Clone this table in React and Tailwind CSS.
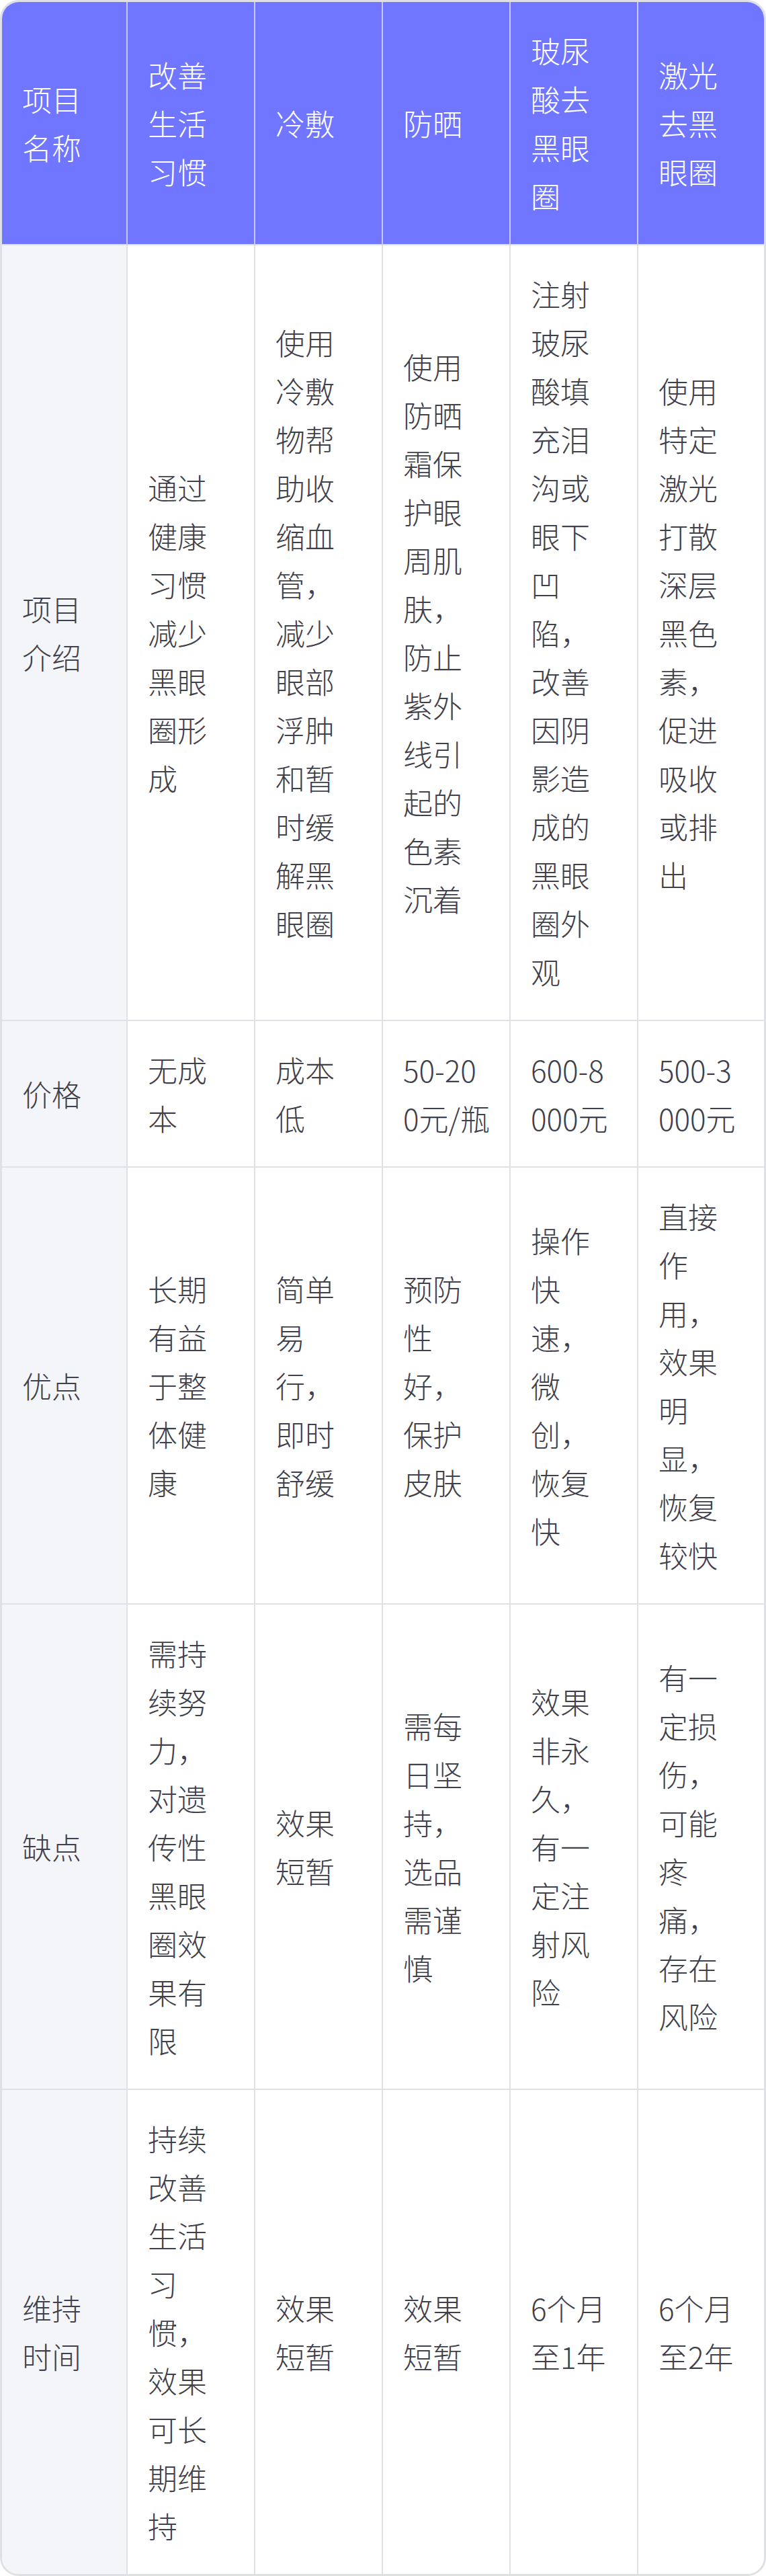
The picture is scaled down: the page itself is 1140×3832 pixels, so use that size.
const headers = ['项目名称', '改善生活习惯', '冷敷', '防晒', '玻尿酸去黑眼圈', '激光去黑眼圈'];

const rows = [
  [
    '项目介绍',
    '通过健康习惯减少黑眼圈形成',
    '使用冷敷物帮助收缩血管，减少眼部浮肿和暂时缓解黑眼圈',
    '使用防晒霜保护眼周肌肤，防止紫外线引起的色素沉着',
    '注射玻尿酸填充泪沟或眼下凹陷，改善因阴影造成的黑眼圈外观',
    '使用特定激光打散深层黑色素，促进吸收或排出',
  ],
  ['价格', '无成本', '成本低', '50-200元/瓶', '600-8000元', '500-3000元'],
  ['优点', '长期有益于整体健康', '简单易行，即时舒缓', '预防性好，保护皮肤', '操作快速，微创，恢复快', '直接作用，效果明显，恢复较快'],
  [
    '缺点',
    '需持续努力，对遗传性黑眼圈效果有限',
    '效果短暂',
    '需每日坚持，选品需谨慎',
    '效果非永久，有一定注射风险',
    '有一定损伤，可能疼痛，存在风险',
  ],
  ['维持时间', '持续改善生活习惯，效果可长期维持', '效果短暂', '效果短暂', '6个月至1年', '6个月至2年'],
];

export default function App() {
  return (
    <div className="w-[1140px] bg-white" style={{ fontFamily: '"Noto Sans CJK SC", "Noto Sans", sans-serif' }}>
      <div className="border-[3px] border-[#dfe0e6] rounded-[28px] overflow-hidden">
        <div className="grid grid-cols-[187px_190px_190px_190px_190px_187px] text-[44px] leading-[72px] font-light break-all">
          {headers.map((h, i) => (
            <div
              key={h}
              className={
                'flex items-center pl-[30px] pr-[27px] py-9 bg-[#7076ff] text-white border-b-2 border-[#dfe0e6] ' +
                (i < 5 ? 'border-r-2 border-r-[#c5c7f7]' : '')
              }
            >
              {h}
            </div>
          ))}
          {rows.map((row, r) =>
            row.map((cell, i) => (
              <div
                key={r + '-' + i}
                className={[
                  'flex items-center pl-[30px] pr-[27px] py-9 text-[#3e404c] border-[#e0e1e6]',
                  r < rows.length - 1 ? 'border-b-2' : '',
                  i < 5 ? 'border-r-2' : '',
                  i === 0 ? 'bg-[#f4f5f9]' : 'bg-white',
                ].join(' ')}
              >
                {cell}
              </div>
            ))
          )}
        </div>
      </div>
    </div>
  );
}
